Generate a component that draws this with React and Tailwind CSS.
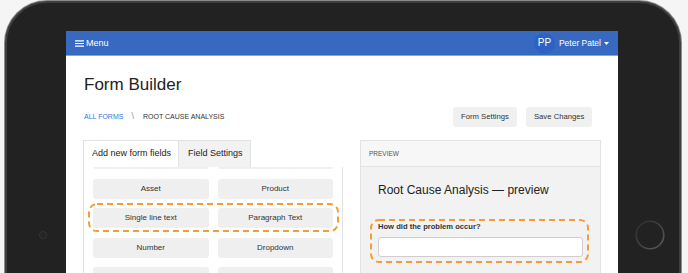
export default function App() {
  const Btn = ({ children }) => (
    <div className="flex-1 h-[20px] bg-[#efefef] rounded-[3px] flex items-center justify-center text-[8px] text-[#333]">
      {children}
    </div>
  );
  return (
    <div className="w-[688px] h-[273px] overflow-hidden bg-[#f5f5f5] pl-[5px] pt-[1px] font-['Liberation_Sans',Arial,sans-serif]">
      <div className="w-[676px] h-[468px] rounded-[42px] bg-[#222222] border-[2px] border-[#3e3e3e] shadow-[0_0_0_1px_#8c8c8c] flex">
        {/* left bezel */}
        <div className="w-[59px] shrink-0 flex items-center pl-[32px]">
          <div className="w-[8px] h-[8px] rounded-full border border-[#353535] bg-[#242424]" />
        </div>
        {/* screen */}
        <div className="w-[552px] shrink-0 my-[28px] bg-white flex flex-col overflow-hidden">
          <div className="h-[25px] bg-[#3869c0] border-b border-[#80a4df] flex items-center pl-[9px] pr-[9px] text-white">
            <svg width="9" height="7" viewBox="0 0 9 7" className="shrink-0">
              <path d="M0 0.8H9M0 3.5H9M0 6.2H9" stroke="white" strokeWidth="1.2" />
            </svg>
            <span className="ml-[2px] text-[9px] leading-none">Menu</span>
            <div className="ml-auto flex items-center">
              <div className="w-[21px] h-[21px] rounded-full bg-[#2c62c6] flex items-center justify-center text-[10px] font-medium leading-none">
                PP
              </div>
              <span className="ml-[4px] text-[8.5px] leading-none">Peter Patel</span>
              <svg width="5" height="3" viewBox="0 0 5 3" className="ml-[3px]">
                <path d="M0 0H5L2.5 3Z" fill="white" />
              </svg>
            </div>
          </div>
          <div className="px-[17px] flex flex-col flex-1">
            <div className="pt-[19px] pl-[1px] text-[17px] leading-[20px] text-[#222]">Form Builder</div>
            <div className="mt-[12px] h-[20px] flex items-center pl-[1px]">
              <span className="text-[7px] text-[#3b78d8]">ALL FORMS</span>
              <span className="ml-[8px] text-[9px] text-[#999]">\</span>
              <span className="ml-[9px] text-[7px] text-[#333]">ROOT CAUSE ANALYSIS</span>
              <div className="ml-auto mr-[9px] flex gap-[9px]">
                <div className="h-[20px] px-[8.5px] bg-[#f0f0f0] rounded-[3px] flex items-center text-[7.7px] text-[#333]">Form Settings</div>
                <div className="h-[20px] px-[7.6px] bg-[#f0f0f0] rounded-[3px] flex items-center text-[7.7px] text-[#333]">Save Changes</div>
              </div>
            </div>
            <div className="mt-[13px] flex gap-[17px] flex-1">
              {/* left column */}
              <div className="w-[260px] flex flex-col">
                <div className="h-[27px] flex">
                  <div className="w-[96px] border border-b-0 border-[#e2e2e2] bg-white flex items-center pl-[8px] text-[9px] text-[#222]">
                    Add new form fields
                  </div>
                  <div className="w-[72px] border-t border-r border-[#e2e2e2] bg-[#f2f2f2] flex items-center pl-[9px] text-[9px] text-[#222]">
                    Field Settings
                  </div>
                </div>
                <div className="flex-1 border-x border-[#e2e2e2] overflow-hidden px-[9px]">
                  <div className="mt-[-18px] flex flex-col gap-[9.5px]">
                    <div className="flex gap-[9px]"><Btn /><Btn /></div>
                    <div className="flex gap-[9px]"><Btn>Asset</Btn><Btn>Product</Btn></div>
                    <div className="relative flex gap-[9px]">
                      <Btn>Single line text</Btn><Btn>Paragraph Text</Btn>
                      <svg width="251" height="29" className="absolute left-[-5px] top-[-5px] overflow-visible pointer-events-none">
                        <rect x="1" y="1" width="249" height="27" rx="8" fill="none" stroke="#f39c3a" strokeWidth="2" strokeDasharray="6 4" />
                      </svg>
                    </div>
                    <div className="flex gap-[9px]"><Btn>Number</Btn><Btn>Dropdown</Btn></div>
                    <div className="flex gap-[9px]"><Btn /><Btn /></div>
                  </div>
                </div>
              </div>
              {/* right column */}
              <div className="w-[241px] flex flex-col">
                <div className="h-[27px] border border-[#e3e3e3] bg-[#f7f7f7] flex items-center pl-[8px] text-[6.5px] text-[#555]">
                  PREVIEW
                </div>
                <div className="flex-1 bg-[#f2f2f2] border-x border-[#e3e3e3] px-[17px]">
                  <div className="pt-[15px] text-[12px] leading-[16px] text-[#222]">Root Cause Analysis — preview</div>
                  <div className="relative mt-[24px]">
                    <div className="text-[7.6px] leading-[10px] font-bold text-[#333]">How did the problem occur?</div>
                    <div className="mt-[5px] h-[20px] bg-white border border-[#cfcfcf] rounded-[3px]" />
                    <svg width="219" height="44" className="absolute left-[-8px] top-[-3px] overflow-visible pointer-events-none">
                      <rect x="1" y="1" width="217" height="42" rx="8" fill="none" stroke="#f39c3a" strokeWidth="2" strokeDasharray="6 4" />
                    </svg>
                  </div>
                </div>
              </div>
            </div>
          </div>
        </div>
        {/* right bezel */}
        <div className="flex-1 flex items-center pl-[17px]">
          <svg width="30" height="30" viewBox="0 0 30 30">
            <defs>
              <linearGradient id="hb" x1="0" y1="0" x2="1" y2="1">
                <stop offset="0" stopColor="#2b2b2b" />
                <stop offset="1" stopColor="#5c5c5c" />
              </linearGradient>
            </defs>
            <circle cx="15" cy="15" r="13.8" fill="#222" stroke="url(#hb)" strokeWidth="1.6" />
          </svg>
        </div>
      </div>
    </div>
  );
}
